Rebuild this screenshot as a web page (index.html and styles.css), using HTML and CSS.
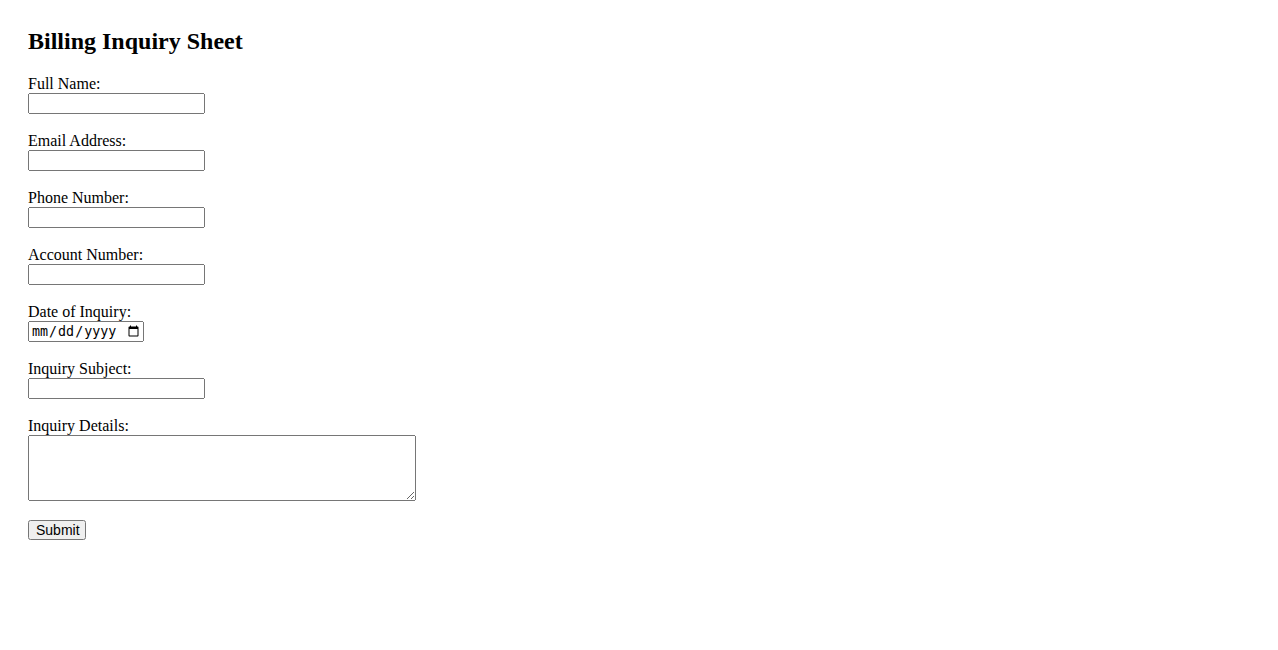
FILE: index.html
```html
<!DOCTYPE html>
<html lang="en">
<head>
<meta charset="utf-8">
<title>Billing Inquiry Sheet</title>
<link rel="stylesheet" href="styles.css">
</head>
<body>
<div class="sheet">
  <h2 class="title">Billing Inquiry Sheet</h2>
  <form class="form">
    <label for="name">Full Name:</label><br>
    <input class="field" type="text" id="name"><br><br>
    <label for="email">Email Address:</label><br>
    <input class="field" type="email" id="email"><br><br>
    <label for="phone">Phone Number:</label><br>
    <input class="field" type="tel" id="phone"><br><br>
    <label for="account">Account Number:</label><br>
    <input class="field" type="text" id="account"><br><br>
    <label for="date">Date of Inquiry:</label><br>
    <input class="field date" type="date" id="date"><br><br>
    <label for="subject">Inquiry Subject:</label><br>
    <input class="field" type="text" id="subject"><br><br>
    <label for="details">Inquiry Details:</label><br>
    <textarea class="details" id="details" rows="4" cols="50"></textarea><br><br>
    <input class="submit" type="submit" value="Submit">
  </form>
</div>
</body>
</html>
```
FILE: styles.css
```css
body {
  margin: 8px;
  font-family: "Liberation Serif", "Times New Roman", serif;
  font-size: 16px;
  color: #000;
  background: #fff;
}
.sheet {
  padding: 20px;
}
.title {
  margin: 0 0 20px 0;
  font-size: 24px;
}
.form {
  margin: 0;
}
.field {
  box-sizing: border-box;
  width: 177px;
  height: 21px;
}
.field.date {
  width: 116px;
}
.details {
  box-sizing: border-box;
  width: 388px;
  height: 66px;
  vertical-align: bottom;
}
.submit {
  box-sizing: border-box;
  width: 58px;
  height: 20px;
  margin-top: 1px;
  padding: 0 6px;
  font-family: "Liberation Sans", Arial, sans-serif;
  font-size: 14px;
}
```
